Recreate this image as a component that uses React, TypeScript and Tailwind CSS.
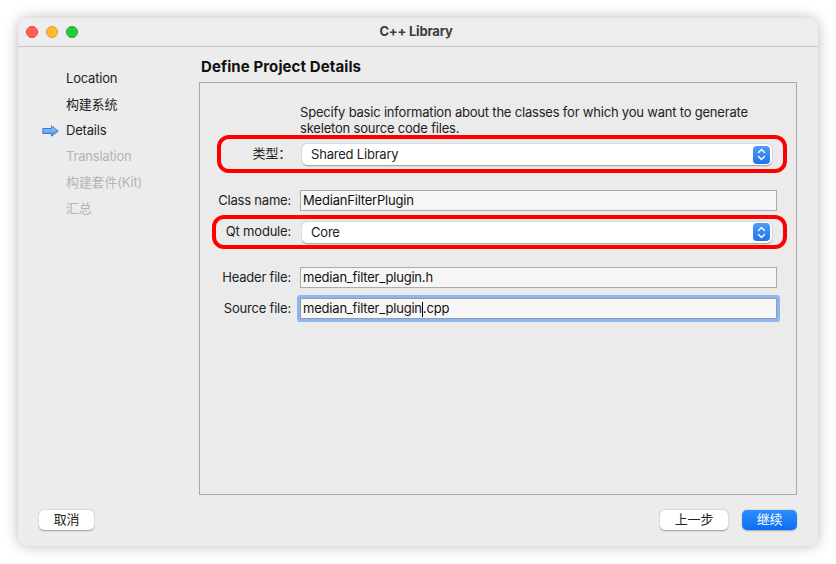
import React from "react";

const font = { fontFamily: 'Inter, "Noto Sans CJK SC", sans-serif', letterSpacing: "-0.2px" };

const steps = [
  { label: "Location", state: "done" },
  { label: "构建系统", state: "done" },
  { label: "Details", state: "current" },
  { label: "Translation", state: "todo" },
  { label: "构建套件(Kit)", state: "todo" },
  { label: "汇总", state: "todo" },
];

function StepArrow() {
  return (
    <svg width="17" height="12" viewBox="0 0 17 12">
      <defs>
        <linearGradient id="arr" x1="0" y1="0" x2="0" y2="1">
          <stop offset="0" stopColor="#a9cdfa" />
          <stop offset="1" stopColor="#3d8ee8" />
        </linearGradient>
      </defs>
      <path
        d="M0.8 3.5 H9.5 V0.8 L16.2 6 L9.5 11.2 V8.5 H0.8 Z"
        fill="url(#arr)"
        stroke="#2f73c9"
        strokeWidth="0.9"
        strokeLinejoin="round"
      />
    </svg>
  );
}

function Stepper() {
  return (
    <div className="w-[17px] h-[18px] rounded-[4px] bg-gradient-to-b from-[#4f9bf7] to-[#1e74ea] flex items-center justify-center">
      <svg width="9" height="13" viewBox="0 0 9 13" fill="none" stroke="white" strokeWidth="1.4" strokeLinecap="round" strokeLinejoin="round">
        <path d="M1.5 4.5 L4.5 1.5 L7.5 4.5" />
        <path d="M1.5 8.5 L4.5 11.5 L7.5 8.5" />
      </svg>
    </div>
  );
}

function Combo({ value }: { value: string }) {
  return (
    <div className="w-[470px] h-[21px] bg-white rounded-[5px] shadow-[0_0.5px_1.5px_rgba(0,0,0,0.35)] flex items-center justify-between pl-[9px] pr-[2px] text-[13px] text-[#222]">
      <span className="pt-[1px]">{value}</span>
      <Stepper />
    </div>
  );
}

function Field({ label, value, focused }: { label: string; value: React.ReactNode; focused?: boolean }) {
  return (
    <div className="flex items-center">
      <div className="w-[91px] text-right text-[13px] text-[#222]">{label}</div>
      <div
        className={
          "ml-[9px] w-[477px] h-[21px] bg-[#f6f6f6] border flex items-center pl-[2px] pt-[1px] text-[13px] text-[#111] " +
          (focused
            ? "border-[#8e9bb0] ring-[3px] ring-[#8fb7ef] rounded-[1px]"
            : "border-[#ababab]")
        }
      >
        {value}
      </div>
    </div>
  );
}

export default function App() {
  return (
    <div className="w-[836px] h-[564px] bg-white p-[18px]" style={font}>
      <div className="w-[800px] h-[528px] rounded-[10px] bg-[#ececec] shadow-[0_0_14px_rgba(0,0,0,0.28)] flex flex-col overflow-hidden">
        {/* Title bar */}
        <div className="h-[29px] border-b border-[#c6c6c6] bg-[#ededed] flex items-center shrink-0">
          <div className="flex gap-[8px] pl-[8px]">
            <span className="w-[12px] h-[12px] rounded-full bg-[#fe5f57] border border-[#e0443e]" />
            <span className="w-[12px] h-[12px] rounded-full bg-[#febc2e] border border-[#dea123]" />
            <span className="w-[12px] h-[12px] rounded-full bg-[#28c840] border border-[#1aab29]" />
          </div>
          <div className="flex-1 text-center pr-[64px] text-[13px] font-bold text-[#3d3d3d]">C++ Library</div>
        </div>

        {/* Body */}
        <div className="flex flex-1 min-h-0">
          <div className="w-[181px] pt-[19px] shrink-0">
            {steps.map((s) => (
              <div key={s.label} className="h-[26px] flex items-center">
                <div className="w-[48px] flex justify-end pr-[7px]">
                  {s.state === "current" && <StepArrow />}
                </div>
                <span
                  className={
                    "text-[13px] " + (s.state === "todo" ? "text-[#b4b4b4]" : "text-[#1e1e1e]")
                  }
                >
                  {s.label}
                </span>
              </div>
            ))}
          </div>

          <div className="flex-1 flex flex-col pt-[10px] pr-[21px]">
            <h1 className="h-[20px] leading-[20px] pl-[2px] text-[15px] tracking-[0.1px] font-bold text-[#111] mb-[5px]">
              Define Project Details
            </h1>
            <div className="flex-1 border border-[#a9a9a9] bg-[#ebebeb] flex flex-col">
              <p className="mt-[21px] ml-[100px] text-[13px] leading-[16px] text-[#222]">
                Specify basic information about the classes for which you want to generate
                <br />
                skeleton source code files.
              </p>

              {/* 类型 */}
              <div className="-mt-[1px] ml-[17px] w-[570px] h-[38px] border-[4px] border-[#ff0000] rounded-[12px] flex items-center">
                <div className="w-[70px] text-right text-[13px] text-[#222]">类型：</div>
                <div className="ml-[11px] mt-[1px]">
                  <Combo value="Shared Library" />
                </div>
              </div>

              <div className="mt-[17px]">
                <Field label="Class name:" value="MedianFilterPlugin" />
              </div>

              {/* Qt module */}
              <div className="mt-[4px] ml-[12px] w-[575px] h-[34px] border-[4px] border-[#ff0000] rounded-[12px] flex items-center">
                <div className="w-[75px] text-right text-[13px] text-[#222]">Qt module:</div>
                <div className="ml-[11px]">
                  <Combo value="Core" />
                </div>
              </div>

              <div className="mt-[18px]">
                <Field label="Header file:" value="median_filter_plugin.h" />
              </div>
              <div className="mt-[10px]">
                <Field
                  label="Source file:"
                  focused
                  value={
                    <>
                      median_filter_plugin
                      <span className="inline-block w-[1px] h-[15px] bg-black" />
                      .cpp
                    </>
                  }
                />
              </div>
            </div>
          </div>
        </div>

        {/* Footer */}
        <div className="flex items-center justify-between pt-[15px] pb-[16px] px-[21px] shrink-0">
          <button className="w-[55px] h-[20px] rounded-[5px] bg-white shadow-[0_0.5px_1.5px_rgba(0,0,0,0.35)] text-[13px] text-[#222]">
            取消
          </button>
          <div className="flex gap-[14px]">
            <button className="w-[68px] h-[20px] rounded-[5px] bg-white shadow-[0_0.5px_1.5px_rgba(0,0,0,0.35)] text-[13px] text-[#222]">
              上一步
            </button>
            <button className="w-[55px] h-[20px] rounded-[5px] bg-gradient-to-b from-[#2d8cff] to-[#0a6ef2] shadow-[0_0.5px_1.5px_rgba(0,0,0,0.3)] text-[13px] text-white">
              继续
            </button>
          </div>
        </div>
      </div>
    </div>
  );
}
